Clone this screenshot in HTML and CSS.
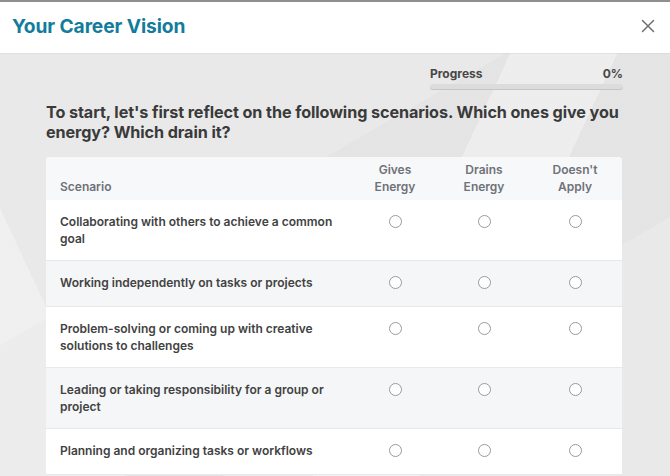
FILE: index.html
```html
<!DOCTYPE html>
<html>
<head>
<meta charset="utf-8">
<link rel="stylesheet" href="styles.css">
</head>
<body>
<header class="topbar">
  <h1 class="title">Your Career Vision</h1>
  <button class="close" aria-label="Close">
    <svg width="14" height="14" viewBox="0 0 14 14"><path d="M1.5 1.5 L12.5 12.5 M12.5 1.5 L1.5 12.5" stroke="#6f6f6f" stroke-width="1.5" stroke-linecap="round" fill="none"/></svg>
  </button>
</header>
<main class="content">
  <div class="progress">
    <div class="progress-head"><span>Progress</span><span>0%</span></div>
    <div class="progress-track"></div>
  </div>
  <h2 class="question">To start, let's first reflect on the following scenarios. Which ones give you energy? Which drain it?</h2>
  <table class="grid">
    <colgroup><col class="c-scen"><col class="c-give"><col class="c-drain"><col class="c-na"></colgroup>
    <thead>
      <tr><th class="th-scen">Scenario</th><th>Gives<br>Energy</th><th>Drains<br>Energy</th><th>Doesn't<br>Apply</th></tr>
    </thead>
    <tbody>
      <tr><td class="scen">Collaborating with others to achieve a common goal</td><td><span class="radio"></span></td><td><span class="radio"></span></td><td><span class="radio"></span></td></tr>
      <tr class="alt"><td class="scen">Working independently on tasks or projects</td><td><span class="radio"></span></td><td><span class="radio"></span></td><td><span class="radio"></span></td></tr>
      <tr><td class="scen">Problem-solving or coming up with creative solutions to challenges</td><td><span class="radio"></span></td><td><span class="radio"></span></td><td><span class="radio"></span></td></tr>
      <tr class="alt"><td class="scen">Leading or taking responsibility for a group or project</td><td><span class="radio"></span></td><td><span class="radio"></span></td><td><span class="radio"></span></td></tr>
      <tr><td class="scen">Planning and organizing tasks or workflows</td><td><span class="radio"></span></td><td><span class="radio"></span></td><td><span class="radio"></span></td></tr>
    </tbody>
  </table>
</main>
</body>
</html>
```
FILE: styles.css
```css
html, body {
  margin: 0;
  padding: 0;
  height: 100%;
  overflow: hidden;
}
body {
  font-family: Inter, "Noto Sans", "Liberation Sans", sans-serif;
  background-color: #e9e9e9;
  background-image:
    linear-gradient(115deg, rgba(255,255,255,0) 0 60%, rgba(255,255,255,0.35) 60% 72%, rgba(255,255,255,0) 72%),
    linear-gradient(65deg, rgba(255,255,255,0.3) 0 14%, rgba(255,255,255,0) 14%),
    linear-gradient(150deg, rgba(0,0,0,0) 0 40%, rgba(0,0,0,0.02) 40% 70%, rgba(0,0,0,0) 70%);
  color: #3b3b3b;
}
.topbar {
  height: 51px;
  border-top: 2px solid #8f8f8f;
  background: #ffffff;
  display: flex;
  align-items: center;
  justify-content: space-between;
  padding: 0 15px 0 12px;
  box-shadow: 0 1px 0 rgba(0,0,0,0.04);
}
.title {
  margin: 0 0 3px 0;
  font-size: 19.2px;
  line-height: 24px;
  font-weight: 700;
  color: #127c9c;
  letter-spacing: -0.1px;
}
.close {
  border: 0;
  background: none;
  padding: 0;
  width: 14px;
  height: 14px;
  display: flex;
  align-items: center;
  justify-content: center;
  margin-top: -4px;
}
.content {
  padding: 13px 48px 0 46px;
}
.progress {
  margin-left: 384px;
  width: 193px;
}
.progress-head {
  display: flex;
  justify-content: space-between;
  font-size: 12px;
  font-weight: 700;
  color: #474747;
  line-height: 16px;
}
.progress-track {
  margin-top: 2px;
  height: 6px;
  border-radius: 3px;
  background: #dcdcdc;
  box-shadow: inset 0 -1px 0 rgba(0,0,0,0.1);
}
.question {
  margin: 12px 0 15px 0;
  font-size: 16.2px;
  line-height: 20px;
  font-weight: 700;
  color: #3a3a3a;
  letter-spacing: -0.1px;
}
.grid {
  width: 576px;
  table-layout: fixed;
  border-collapse: collapse;
  background: #ffffff;
  border-radius: 4px 4px 0 0;
  overflow: hidden;
}
.c-scen { width: 304px; }
.c-give { width: 90px; }
.c-drain { width: 88px; }
.c-na { width: 94px; }
thead tr {
  background: #f7f8fa;
}
th {
  font-size: 12px;
  font-weight: 600;
  color: #6e7278;
  line-height: 17px;
  text-align: center;
  vertical-align: bottom;
  padding: 4px 0 5px 0;
  height: 34px;
}
th.th-scen {
  text-align: left;
  padding-left: 14px;
}
td {
  font-size: 12px;
  font-weight: 600;
  line-height: 17px;
  color: #424242;
  vertical-align: top;
  text-align: center;
  padding: 13px 0 13px 0;
  border-bottom: 1px solid #e6e8ec;
}
td.scen {
  text-align: left;
  padding-left: 14px;
  padding-right: 14px;
}
tr.alt td {
  background: #f5f6f8;
}
.radio {
  display: block;
  margin: 2px auto 4px auto;
  width: 11px;
  height: 11px;
  border: 1px solid #9a9a9a;
  border-radius: 50%;
  background: #ffffff;
}
```
